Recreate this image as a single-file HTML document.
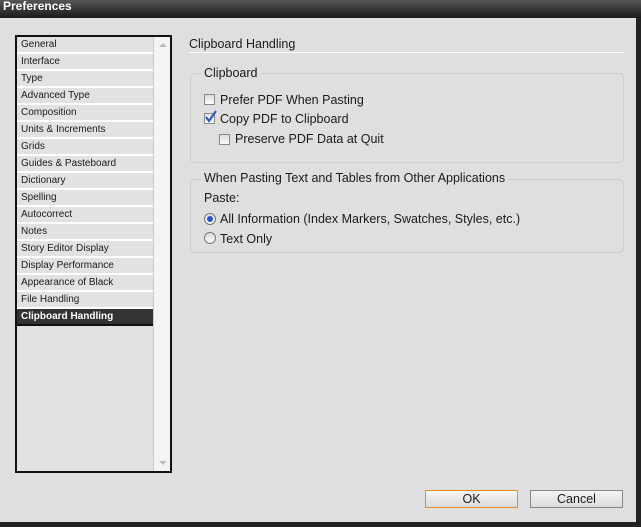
<!DOCTYPE html>
<html><head><style>
*{margin:0;padding:0;box-sizing:border-box}
body{width:641px;height:527px;background:#dfdfdf;font-family:"Liberation Sans",sans-serif;position:relative;overflow:hidden;color:#1a1a1a}
.title{position:absolute;left:0;top:0;width:641px;height:18px;background:linear-gradient(#555,#1a1a1a);color:#fff;font-weight:bold;font-size:12px;line-height:12px;padding:0 0 0 3px}
.rb{position:absolute;left:636px;top:18px;width:5px;height:509px;background:#222}
.bb{position:absolute;left:0;top:522px;width:641px;height:5px;background:#222}
.list{position:absolute;left:15px;top:35px;width:157px;height:438px;border:2px solid #111;background:#e2e2e2}
.item{height:17px;border-bottom:2px solid #fff;font-size:10px;line-height:14px;padding-left:4px;padding-top:1px;width:138px}
.item.sel{background:#333;color:#fff;font-weight:bold;border-bottom:2px solid #111}
.sb{position:absolute;right:0;top:0;width:17px;height:100%;background:#f4f4f4;border-left:1px solid #ccc}
.sb .u,.sb .d{position:absolute;left:5px;width:0;height:0;border-left:4px solid transparent;border-right:4px solid transparent}
.sb .u{top:6px;border-bottom:4px solid #bbb}
.sb .d{bottom:6px;border-top:4px solid #bbb}
.t{position:absolute;font-size:12.5px;white-space:nowrap;line-height:14px}
.hl{position:absolute;left:189px;top:52px;width:435px;height:1px;background:#999;border-bottom:1px solid #fff}
.grp{position:absolute;border:1px solid #ccc;border-radius:5px}
.cb{position:absolute;width:11px;height:11px;border:1px solid #888;background:linear-gradient(#ddd,#fafafa)}
.rd{position:absolute;width:12px;height:12px;border:1px solid #777;border-radius:50%;background:linear-gradient(#ddd,#fafafa)}
.btn{position:absolute;top:490px;width:93px;height:18px;border:1px solid #888;background:linear-gradient(#f4f4f4,#dcdcdc);font-size:12.5px;text-align:center;line-height:16px}
</style></head><body>
<div class="title">Preferences</div>
<div class="list">
<div class="item">General</div><div class="item">Interface</div><div class="item">Type</div><div class="item">Advanced Type</div><div class="item">Composition</div><div class="item">Units &amp; Increments</div><div class="item">Grids</div><div class="item">Guides &amp; Pasteboard</div><div class="item">Dictionary</div><div class="item">Spelling</div><div class="item">Autocorrect</div><div class="item">Notes</div><div class="item">Story Editor Display</div><div class="item">Display Performance</div><div class="item">Appearance of Black</div><div class="item">File Handling</div><div class="item sel">Clipboard Handling</div>
<div class="sb"><div class="u"></div><div class="d"></div></div>
</div>
<div class="t" style="left:189px;top:37px">Clipboard Handling</div>
<div class="hl"></div>
<div class="grp" style="left:190px;top:73px;width:434px;height:90px"></div>
<div class="t" style="left:201px;top:66px;background:#dfdfdf;padding:0 3px">Clipboard</div>
<div class="cb" style="left:204px;top:94px"></div><div class="t" style="left:220px;top:93px">Prefer PDF When Pasting</div>
<div class="cb" style="left:204px;top:113px"></div>
<svg style="position:absolute;left:204px;top:109px" width="14" height="15"><path d="M2 8 L5 12 L12 2" stroke="#2a55c8" stroke-width="2" fill="none"/></svg>
<div class="t" style="left:220px;top:112px">Copy PDF to Clipboard</div>
<div class="cb" style="left:219px;top:134px"></div><div class="t" style="left:235px;top:132px">Preserve PDF Data at Quit</div>
<div class="grp" style="left:190px;top:179px;width:434px;height:74px"></div>
<div class="t" style="left:201px;top:171px;background:#dfdfdf;padding:0 3px">When Pasting Text and Tables from Other Applications</div>
<div class="t" style="left:204px;top:191px">Paste:</div>
<div class="rd" style="left:204px;top:213px"><div style="position:absolute;left:2px;top:2px;width:6px;height:6px;border-radius:50%;background:#2a55c8"></div></div>
<div class="t" style="left:220px;top:212px">All Information (Index Markers, Swatches, Styles, etc.)</div>
<div class="rd" style="left:204px;top:232px"></div>
<div class="t" style="left:220px;top:232px">Text Only</div>
<div class="btn" style="left:425px;border-color:#f08a24">OK</div>
<div class="btn" style="left:530px">Cancel</div>
<div class="rb"></div><div class="bb"></div>
</body></html>
